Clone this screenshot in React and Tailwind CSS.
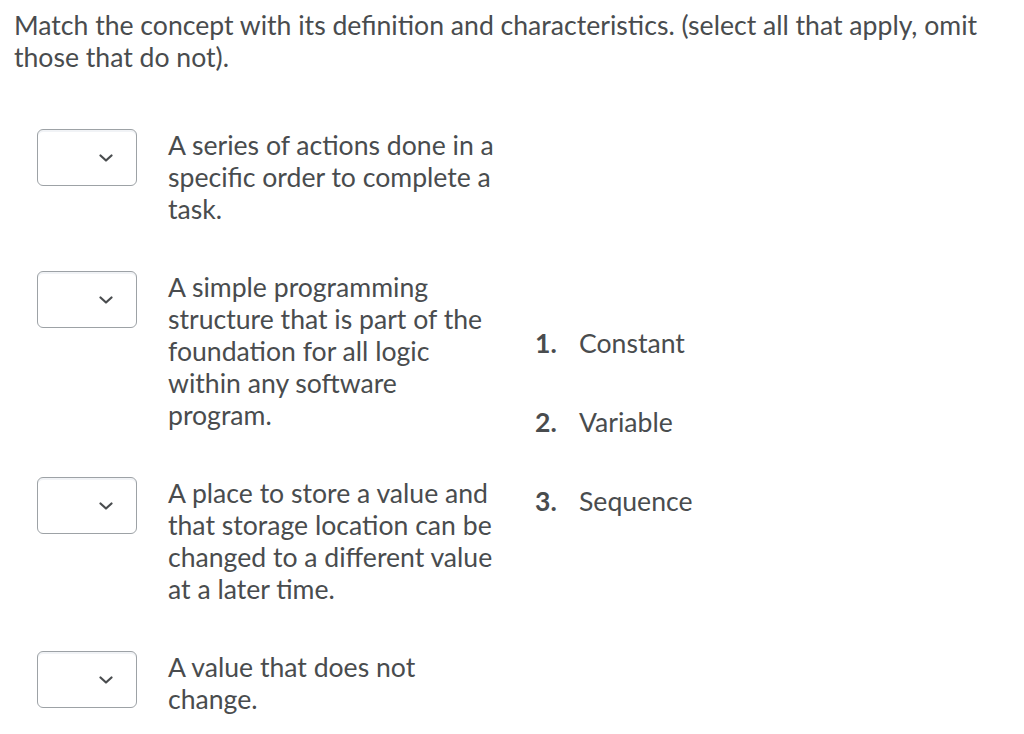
const rows = [
  "A series of actions done in a specific order to complete a task.",
  "A simple programming structure that is part of the foundation for all logic within any software program.",
  "A place to store a value and that storage location can be changed to a different value at a later time.",
  "A value that does not change.",
];

const choices = ["Constant", "Variable", "Sequence"];

function SelectBox() {
  return (
    <div className="w-[100px] h-[57px] shrink-0 rounded-[6px] border border-[#9da2a6] bg-white shadow-[inset_0_2px_0_0_rgba(185,194,208,0.2)] flex items-center justify-end pr-[23px]">
      <svg width="14" height="8" viewBox="0 0 14 8" fill="none">
        <path d="M1.5 1.5 L7 6.5 L12.5 1.5" stroke="#494c4e" strokeWidth="2.2" strokeLinecap="round" strokeLinejoin="round" />
      </svg>
    </div>
  );
}

export default function App() {
  return (
    <div className="min-h-screen bg-white text-[#494c4e] font-['Lato','Noto_Sans',sans-serif] text-[26.6px] leading-[32px]">
      <div className="px-[14px] pt-[9px]">
        <p>
          Match the concept with its definition and characteristics. (select all that apply, omit those that do not).
        </p>
      </div>

      <div className="mt-[56px] flex items-center">
        {/* Definitions with dropdowns */}
        <div className="flex flex-col gap-[46px] pl-[37px]">
          {rows.map((text) => (
            <div key={text} className="flex items-start gap-[31px]">
              <SelectBox />
              <p className="w-[330px]">{text}</p>
            </div>
          ))}
        </div>

        {/* Concepts */}
        <ol className="ml-[37px] flex flex-col gap-[47px]">
          {choices.map((c, i) => (
            <li key={c} className="flex">
              <span className="w-[44px] font-bold">{i + 1}.</span>
              <span>{c}</span>
            </li>
          ))}
        </ol>
      </div>
    </div>
  );
}
